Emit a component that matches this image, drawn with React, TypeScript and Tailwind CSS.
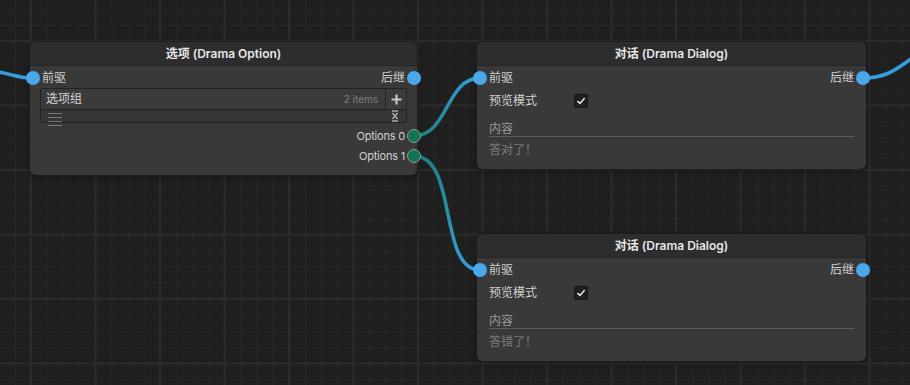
import React from "react";

const FONT = { fontFamily: '"Inter", "Noto Sans CJK SC", "Noto Sans", sans-serif' };

function BluePort({ side }: { side: "left" | "right" }) {
  return (
    <div
      className={
        "w-[14px] h-[14px] rounded-full bg-[#4aa8ea] shrink-0 " +
        (side === "left" ? "-ml-[4px] mr-[2px]" : "-mr-[4px] ml-[2px]")
      }
    />
  );
}

function GreenPort() {
  return (
    <div className="w-[14px] h-[14px] rounded-full bg-[#137352] border border-[#8a9a94] shrink-0 -mr-[4px] ml-[2px]" />
  );
}

function Header({ title }: { title: string }) {
  return (
    <div className="h-[24px] bg-[#2d2d2d] rounded-t-[6px] flex items-center justify-center text-[12px] font-semibold text-[#e6e6e6] border-b border-[#262626]">
      {title}
    </div>
  );
}

function FlowRow() {
  return (
    <div className="h-[20px] mt-[2px] flex items-center justify-between text-[12px] text-[#d0d0d0]">
      <div className="flex items-center">
        <BluePort side="left" />
        <span>前驱</span>
      </div>
      <div className="flex items-center">
        <span>后继</span>
        <BluePort side="right" />
      </div>
    </div>
  );
}

function Check() {
  return (
    <div className="w-[14px] h-[14px] rounded-[2px] bg-[#1f1f1f] border border-[#171717] flex items-center justify-center">
      <svg width="10" height="10" viewBox="0 0 10 10">
        <path d="M1.8 5.4 L4 7.5 L8.3 2.6" stroke="#e8e8e8" strokeWidth="1.5" fill="none" strokeLinecap="round" strokeLinejoin="round" />
      </svg>
    </div>
  );
}

function DialogNode({ left, top, text }: { left: number; top: number; text: string }) {
  return (
    <div
      className="absolute w-[389px] h-[127px] bg-[#393939] rounded-[6px] shadow-[0_0_0_1px_#1c1c1c,0_2px_6px_rgba(0,0,0,0.35)]"
      style={{ left, top }}
    >
      <Header title="对话 (Drama Dialog)" />
      <FlowRow />
      <div className="h-[20px] mt-[3px] pl-[12px] flex items-center text-[12px] text-[#d0d0d0]">
        <span className="w-[85px]">预览模式</span>
        <Check />
      </div>
      <div className="mt-[9px] mx-[12px] h-[17px] flex items-end text-[12px] text-[#9a9a9a] border-b border-[#5c5c5c] leading-[15px]">
        内容
      </div>
      <div className="mx-[12px] mt-[2px] h-[22px] flex items-center text-[12px] text-[#7c7c7c]">{text}</div>
    </div>
  );
}

function OptionNode() {
  return (
    <div className="absolute left-[30px] top-[42px] w-[387px] h-[133px] bg-[#393939] rounded-[6px] shadow-[0_0_0_1px_#1c1c1c,0_2px_6px_rgba(0,0,0,0.35)]">
      <Header title="选项 (Drama Option)" />
      <FlowRow />
      <div className="mx-[10px] border border-[#232323] rounded-[2px]">
        <div className="h-[21px] flex items-stretch bg-[#3b3b3b] border-b border-[#232323]">
          <div className="flex-1 flex items-center justify-between pl-[5px] pr-[7px]">
            <span className="text-[12px] text-[#d4d4d4]">选项组</span>
            <span className="text-[10px] text-[#7e7e7e]">2 items</span>
          </div>
          <div className="w-[21px] border-l border-[#232323] flex items-center justify-center">
            <svg width="11" height="11" viewBox="0 0 11 11">
              <path d="M5.5 0.5 V10.5 M0.5 5.5 H10.5" stroke="#c9c9c9" strokeWidth="2.2" />
            </svg>
          </div>
        </div>
        <div className="h-[12px] bg-[#353535] relative flex items-start justify-between pl-[6px] pr-[6px]">
          <svg width="16" height="16" viewBox="0 0 16 16" className="mt-[2px]">
            <path d="M1 1.5 H15 M1 5.5 H15 M1 9.5 H15 M1 13.5 H15" stroke="#7a7a7a" strokeWidth="1" />
          </svg>
          <svg width="10" height="12" viewBox="0 0 10 12">
            <path d="M2 1 H8 M2 11 H8 M2.5 3 L7.5 9 M7.5 3 L2.5 9" stroke="#a8a8a8" strokeWidth="1.6" />
          </svg>
        </div>
      </div>
      <div className="mt-[3px] h-[20px] flex items-center justify-end text-[11px] tracking-[-0.2px] text-[#d0d0d0]">
        <span>Options 0</span>
        <GreenPort />
      </div>
      <div className="h-[20px] flex items-center justify-end text-[11px] tracking-[-0.2px] text-[#d0d0d0]">
        <span>Options 1</span>
        <GreenPort />
      </div>
    </div>
  );
}

function Edges() {
  return (
    <svg className="absolute inset-0 pointer-events-none" width="910" height="385">
      <defs>
        <linearGradient id="g0" gradientUnits="userSpaceOnUse" x1="414" y1="136" x2="480" y2="78">
          <stop offset="0" stopColor="#218079" />
          <stop offset="1" stopColor="#3d9cda" />
        </linearGradient>
        <linearGradient id="g1" gradientUnits="userSpaceOnUse" x1="414" y1="156" x2="480" y2="270">
          <stop offset="0" stopColor="#218079" />
          <stop offset="1" stopColor="#3d9cda" />
        </linearGradient>
      </defs>
      <g fill="none" strokeLinecap="round">
        <path d="M-10 71 C 8 72 16 78 31 78" stroke="#16344a" strokeWidth="5" />
        <path d="M-10 71 C 8 72 16 78 31 78" stroke="#3d9cda" strokeWidth="3.4" />
        <path d="M863 78 C 888 78 898 68 918 54" stroke="#16344a" strokeWidth="5" />
        <path d="M863 78 C 888 78 898 68 918 54" stroke="#3d9cda" strokeWidth="3.4" />
        <path d="M414 136 C 448 136 446 78 480 78" stroke="#12302e" strokeWidth="5" />
        <path d="M414 136 C 448 136 446 78 480 78" stroke="url(#g0)" strokeWidth="3.4" />
        <path d="M414 156 C 458 156 438 270 480 270" stroke="#12302e" strokeWidth="5" />
        <path d="M414 156 C 458 156 438 270 480 270" stroke="url(#g1)" strokeWidth="3.4" />
      </g>
    </svg>
  );
}

export default function App() {
  return (
    <div
      className="relative w-[910px] h-[385px] overflow-hidden bg-[#1f1f1f] [background-image:linear-gradient(to_right,#2b2b2b_2px,transparent_2px),linear-gradient(to_bottom,#2b2b2b_2px,transparent_2px),linear-gradient(to_right,#262626_1px,transparent_1px),linear-gradient(to_bottom,#262626_1px,transparent_1px)] [background-size:64.5px_64.5px,64.5px_64.5px,16.125px_16.125px,16.125px_16.125px] [background-position:30px_40px,30px_40px,31px_41px,31px_41px]"
      style={FONT}
    >
      <Edges />
      <OptionNode />
      <DialogNode left={477} top={42} text="答对了！" />
      <DialogNode left={477} top={234} text="答错了！" />
    </div>
  );
}
